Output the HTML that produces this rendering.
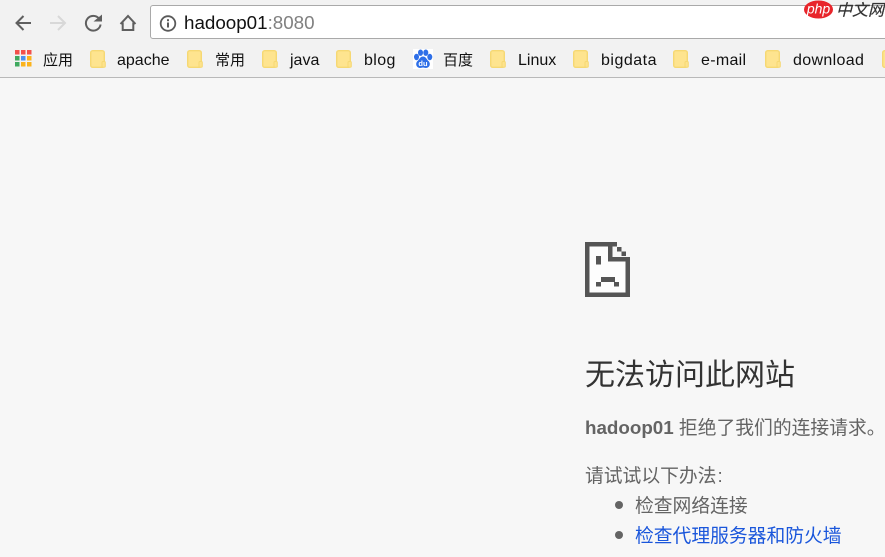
<!DOCTYPE html>
<html><head><meta charset="utf-8">
<style>
html,body{margin:0;padding:0;width:885px;height:557px;overflow:hidden;background:#f7f7f7}
body{position:relative;font-family:"Liberation Sans","Noto Sans CJK SC",sans-serif}
.bar{position:absolute;left:0;top:0;width:885px;height:77px;background:#f2f2f2;border-bottom:1px solid #b9b9b9}
.url{position:absolute;left:150px;top:5px;width:740px;height:34px;box-sizing:border-box;background:#fff;border:1px solid #a9a9a9;border-radius:3px 0 0 3px}
.t{position:absolute;white-space:nowrap}
.bm{position:absolute;top:52px;font-size:16px;line-height:18px;color:#111;white-space:nowrap}
.c{top:52px;font-size:15px}
.f{position:absolute;top:50px;width:16px;height:18px}
.b{font-size:18.8px;line-height:24px;color:#646464}
</style></head><body>
<div class="bar"></div>
<svg style="position:absolute;left:0;top:0" width="150" height="40" viewBox="0 0 150 40" fill="none">
<path d="M31 23H17M23.500 16l-7 7 7 7" stroke="#5f5f5f" stroke-width="2"/>
<path d="M50 23H64.500M58 16l7 7-7 7" stroke="#d8d8d8" stroke-width="2"/>
<path d="M99 18.500a7.400 7.400 0 1 0 1.600 6" stroke="#5f5f5f" stroke-width="2"/>
<path d="M93.500 21.500h8.500v-7z" fill="#5f5f5f"/>
<path d="M120.500 24l7.500-8 7.500 8M122.700 22.500V30h10.600v-7.500" stroke="#5f5f5f" stroke-width="2"/>
</svg>
<div class="url"></div>
<svg style="position:absolute;left:159px;top:14px" width="19" height="19" viewBox="0 0 19 19" fill="none">
<circle cx="9" cy="9.500" r="7.300" stroke="#5a5a5a" stroke-width="1.800"/>
<rect x="8" y="8.500" width="2" height="5" fill="#5a5a5a"/><rect x="8" y="5.200" width="2" height="2" fill="#5a5a5a"/>
</svg>
<div class="t" style="left:184px;top:12px;font-size:18.800px;line-height:22px;color:#111">hadoop01<span style="color:#808080">:8080</span></div>
<svg style="position:absolute;left:804px;top:0" width="81" height="20" viewBox="0 0 81 20">
<ellipse cx="14.500" cy="9.500" rx="14.500" ry="9" fill="#e8252b"/>
<text x="14.500" y="13.500" font-family="Liberation Sans" font-size="14" font-style="italic" fill="#fff" text-anchor="middle">php</text>
<text x="32" y="15.500" font-family="Liberation Sans,Noto Sans CJK SC,sans-serif" font-size="16" font-style="italic" fill="#333" stroke="#333" stroke-width=".2">中文网</text>
</svg>

<svg style="position:absolute;left:14px;top:50px" width="18" height="18" viewBox="0 0 18 18">
<rect x="1" y="0" width="4.500" height="4.500" fill="#f2514c"/><rect x="7" y="0" width="4.500" height="4.500" fill="#f2514c"/><rect x="13" y="0" width="4.500" height="4.500" fill="#f2514c"/>
<rect x="1" y="6" width="4.500" height="4.500" fill="#3fa95f"/><rect x="7" y="6" width="4.500" height="4.500" fill="#4a90f0"/><rect x="13" y="6" width="4.500" height="4.500" fill="#fbb31c"/>
<rect x="1" y="12" width="4.500" height="4.500" fill="#3fa95f"/><rect x="7" y="12" width="4.500" height="4.500" fill="#fbb31c"/><rect x="13" y="12" width="4.500" height="4.500" fill="#fbb31c"/>
</svg>
<div class="bm c" style="left:43px">应用</div>

<svg class="f" style="left:90px" viewBox="0 0 16 18"><rect x=".7" y=".7" width="13.600" height="16.600" rx="2" fill="#fee48f" stroke="#f6d873" stroke-width="1.400"/><rect x="12" y="11.500" width="3.300" height="5.800" rx="1" fill="#fde38c" stroke="#f6d873"/></svg>
<div class="bm" style="left:117px">apache</div>
<svg class="f" style="left:187px" viewBox="0 0 16 18"><rect x=".7" y=".7" width="13.600" height="16.600" rx="2" fill="#fee48f" stroke="#f6d873" stroke-width="1.400"/><rect x="12" y="11.500" width="3.300" height="5.800" rx="1" fill="#fde38c" stroke="#f6d873"/></svg>
<div class="bm c" style="left:215px">常用</div>
<svg class="f" style="left:262px" viewBox="0 0 16 18"><rect x=".7" y=".7" width="13.600" height="16.600" rx="2" fill="#fee48f" stroke="#f6d873" stroke-width="1.400"/><rect x="12" y="11.500" width="3.300" height="5.800" rx="1" fill="#fde38c" stroke="#f6d873"/></svg>
<div class="bm" style="left:290px">java</div>
<svg class="f" style="left:336px" viewBox="0 0 16 18"><rect x=".7" y=".7" width="13.600" height="16.600" rx="2" fill="#fee48f" stroke="#f6d873" stroke-width="1.400"/><rect x="12" y="11.500" width="3.300" height="5.800" rx="1" fill="#fde38c" stroke="#f6d873"/></svg>
<div class="bm" style="left:364px;letter-spacing:.4px">blog</div>
<svg style="position:absolute;left:413px;top:49px" width="20" height="20" viewBox="0 0 20 20">
<rect width="20" height="20" fill="#fff"/>
<ellipse cx="3.500" cy="8" rx="2.500" ry="3.200" fill="#2e6fe8"/><ellipse cx="7.500" cy="3.700" rx="2.500" ry="3.200" fill="#2e6fe8"/><ellipse cx="12.800" cy="3.700" rx="2.500" ry="3.200" fill="#2e6fe8"/><ellipse cx="16.800" cy="8" rx="2.500" ry="3.200" fill="#2e6fe8"/>
<path d="M10 7.500c-3 0-3.500 3-5.800 4.800C2 15 3.500 19 7 19c1.500 0 2-.5 3-.5s1.500.5 3 .5c3.500 0 5-4 2.800-6.700C13.500 10.500 13 7.500 10 7.500z" fill="#2e6fe8"/>
<text x="10" y="17" font-family="Liberation Sans" font-size="7.500" font-weight="bold" fill="#fff" text-anchor="middle">du</text>
</svg>
<div class="bm c" style="left:443px">百度</div>
<svg class="f" style="left:490px" viewBox="0 0 16 18"><rect x=".7" y=".7" width="13.600" height="16.600" rx="2" fill="#fee48f" stroke="#f6d873" stroke-width="1.400"/><rect x="12" y="11.500" width="3.300" height="5.800" rx="1" fill="#fde38c" stroke="#f6d873"/></svg>
<div class="bm" style="left:518px">Linux</div>
<svg class="f" style="left:573px" viewBox="0 0 16 18"><rect x=".7" y=".7" width="13.600" height="16.600" rx="2" fill="#fee48f" stroke="#f6d873" stroke-width="1.400"/><rect x="12" y="11.500" width="3.300" height="5.800" rx="1" fill="#fde38c" stroke="#f6d873"/></svg>
<div class="bm" style="left:601px;letter-spacing:.5px">bigdata</div>
<svg class="f" style="left:673px" viewBox="0 0 16 18"><rect x=".7" y=".7" width="13.600" height="16.600" rx="2" fill="#fee48f" stroke="#f6d873" stroke-width="1.400"/><rect x="12" y="11.500" width="3.300" height="5.800" rx="1" fill="#fde38c" stroke="#f6d873"/></svg>
<div class="bm" style="left:701px;letter-spacing:.3px">e-mail</div>
<svg class="f" style="left:765px" viewBox="0 0 16 18"><rect x=".7" y=".7" width="13.600" height="16.600" rx="2" fill="#fee48f" stroke="#f6d873" stroke-width="1.400"/><rect x="12" y="11.500" width="3.300" height="5.800" rx="1" fill="#fde38c" stroke="#f6d873"/></svg>
<div class="bm" style="left:793px;letter-spacing:.35px">download</div>
<svg class="f" style="left:882px" viewBox="0 0 16 18"><rect x=".7" y=".7" width="13.600" height="16.600" rx="2" fill="#fee48f" stroke="#f6d873" stroke-width="1.400"/></svg>

<svg style="position:absolute;left:585px;top:242px" width="46" height="56" viewBox="0 0 46 56">
<path d="M2 2h22v15h19v36H2z" fill="#fff" fill-opacity=".7"/>
<g fill="#555">
<rect x="0" y="0" width="32" height="4.500"/><rect x="0" y="0" width="4.500" height="55"/><rect x="0" y="50.500" width="45" height="4.500"/><rect x="40.500" y="15" width="4.500" height="40"/>
<rect x="23" y="0" width="4.500" height="19"/><rect x="23" y="15" width="22" height="4.500"/>
<rect x="32" y="5" width="4.500" height="4.500"/><rect x="36.500" y="9.500" width="4.500" height="4.500"/>
<rect x="11" y="14" width="5" height="8.500"/>
<rect x="16" y="35" width="14" height="5"/><rect x="11" y="40" width="5" height="4.500"/><rect x="29" y="40" width="5" height="4.500"/>
</g>
</svg>

<div class="t" style="left:585px;top:357px;font-size:30px;line-height:38px;color:#333">无法访问此网站</div>
<div class="t b" style="left:585px;top:416px"><b>hadoop01</b> 拒绝了我们的连接请求。</div>
<div class="t b" style="left:585px;top:464px">请试试以下办法<span style="margin-left:1px">:</span></div>
<div style="position:absolute;left:615px;top:501px;width:8px;height:8px;border-radius:50%;background:#646464"></div>
<div class="t b" style="left:635px;top:494px">检查网络连接</div>
<div style="position:absolute;left:615px;top:531px;width:8px;height:8px;border-radius:50%;background:#646464"></div>
<div class="t b" style="left:635px;top:524px;color:#1a56db">检查代理服务器和防火墙</div>
</body></html>
